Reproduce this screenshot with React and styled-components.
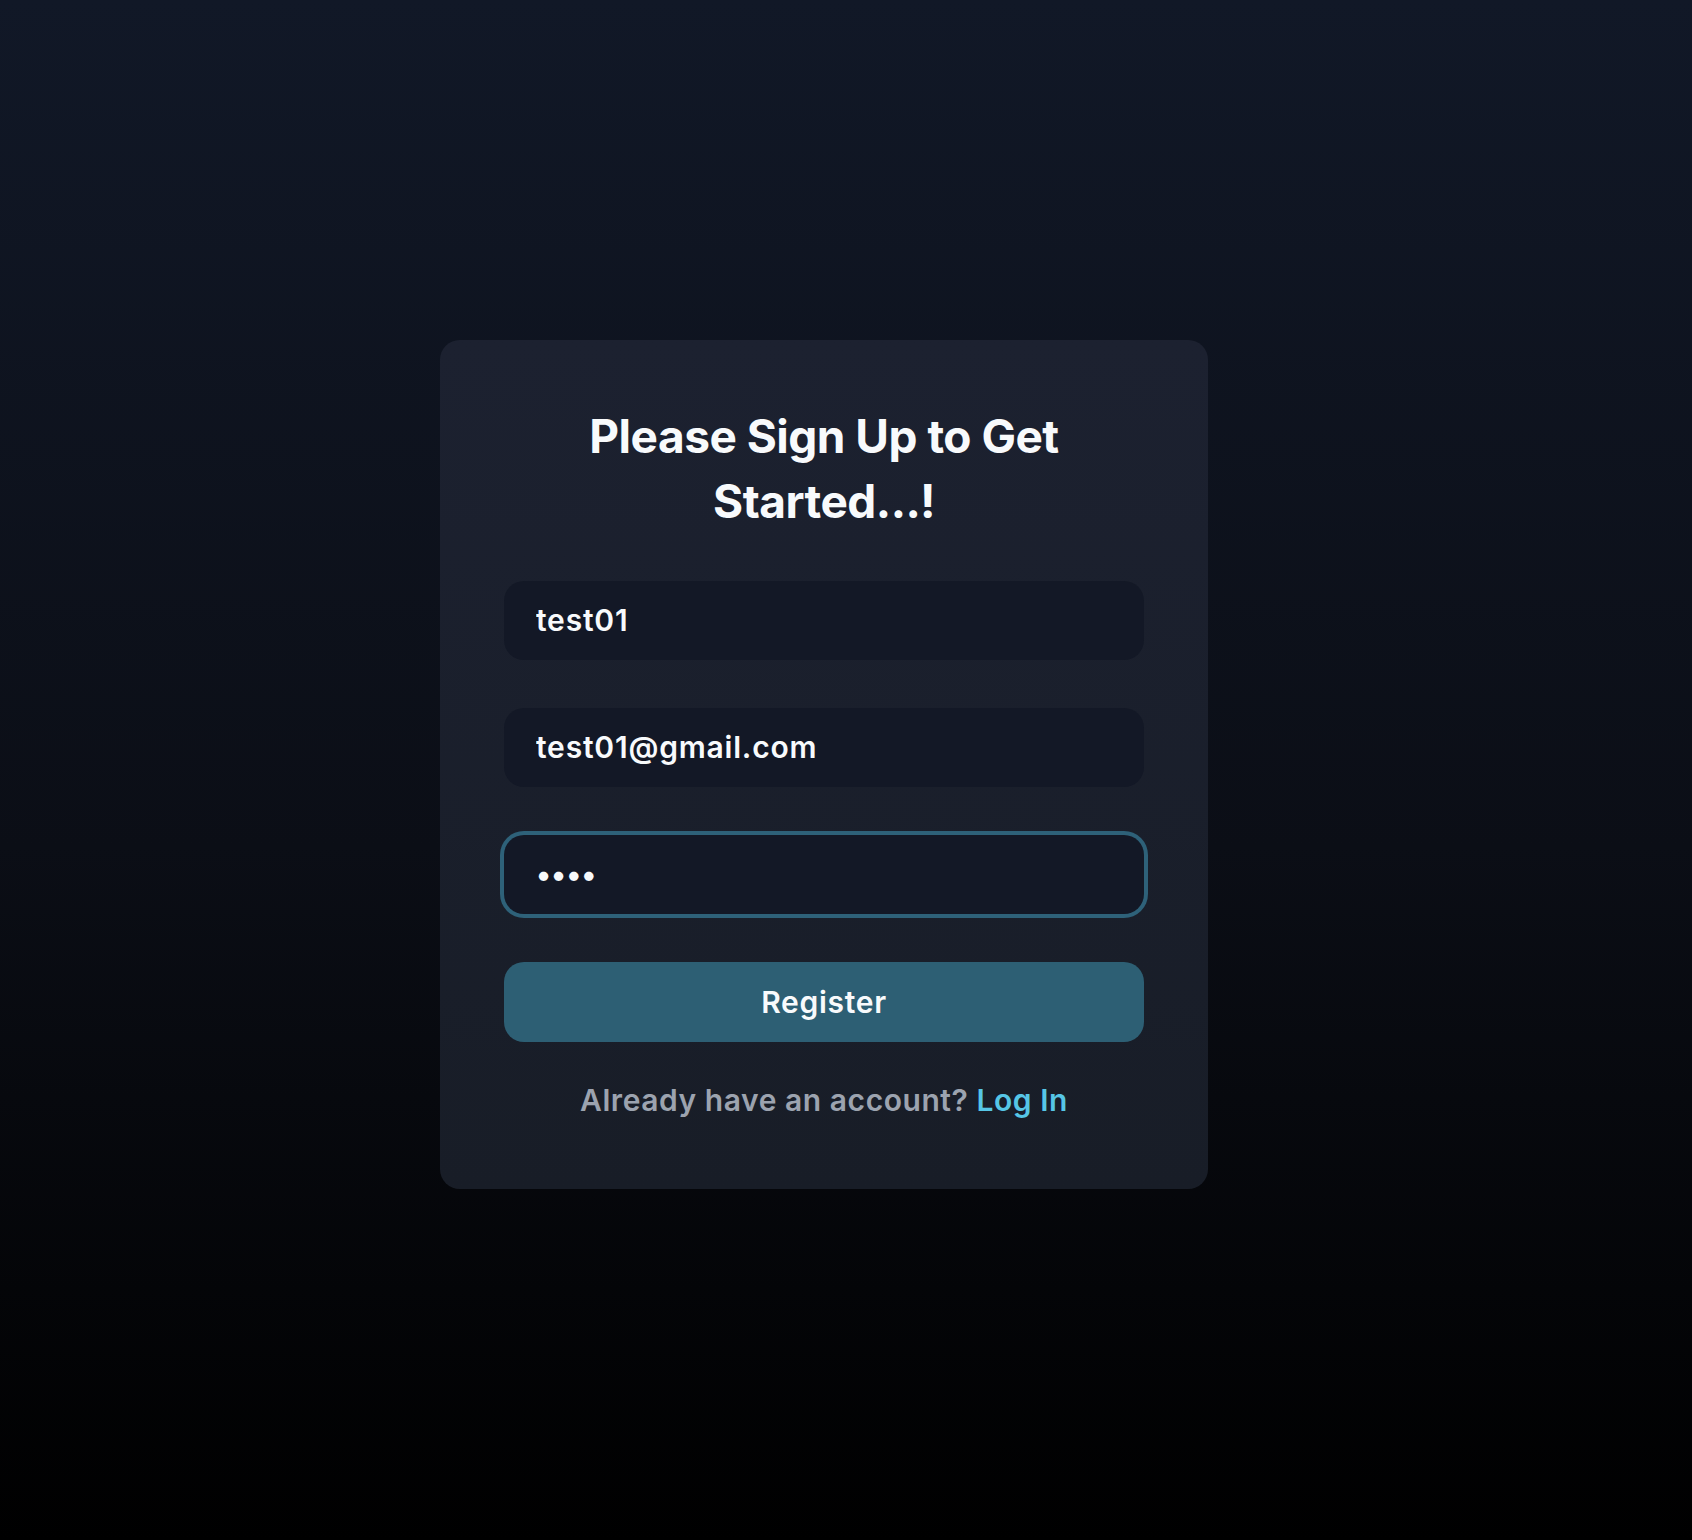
import React from 'react';
import styled, { createGlobalStyle } from 'styled-components';

const GlobalStyle = createGlobalStyle`
  html, body {
    margin: 0;
    padding: 0;
  }
  body {
    font-family: Inter, "Noto Sans", "Liberation Sans", sans-serif;
    background: #000;
  }
  * {
    box-sizing: border-box;
  }
`;

const Page = styled.div`
  min-height: 1540px;
  display: flex;
  align-items: center;
  justify-content: center;
  padding: 0 44px 12px 0;
  background: linear-gradient(to bottom, #111827 0%, #0b0e16 55%, #000000 100%);
`;

const Card = styled.div`
  width: 768px;
  padding: 64px 64px 66px;
  border-radius: 20px;
  background: linear-gradient(to bottom, #1c2130, #181d27);
  display: flex;
  flex-direction: column;
`;

const Title = styled.h1`
  margin: 0 0 47px;
  text-align: center;
  color: #f8fafc;
  font-size: 46px;
  line-height: 65px;
  font-weight: 700;
  letter-spacing: -0.5px;
`;

const Form = styled.form`
  display: flex;
  flex-direction: column;
  gap: 48px;
`;

const Input = styled.input`
  width: 100%;
  height: 79px;
  padding: 0 32px;
  border: none;
  border-radius: 20px;
  background: #131826;
  color: #f8fafc;
  font-family: inherit;
  font-size: 30px;
  font-weight: 600;
  letter-spacing: ${props => (props.type === 'password' ? '0' : '0.8px')};
  outline: none;
  box-shadow: ${props => (props.$active ? '0 0 0 4px #2e6179' : 'none')};
`;

const Button = styled.button`
  width: 100%;
  height: 80px;
  border: none;
  border-radius: 20px;
  background: #2d5f74;
  color: #f8fafc;
  font-family: inherit;
  font-size: 30px;
  font-weight: 600;
  letter-spacing: 0.7px;
  cursor: pointer;
`;

const Footer = styled.p`
  margin: 36px 0 0;
  text-align: center;
  color: #9ca3af;
  font-size: 30px;
  line-height: 45px;
  font-weight: 600;
  letter-spacing: 0.55px;
`;

const LoginLink = styled.a`
  color: #56c6e6;
  text-decoration: none;
`;

const App = () => {
  return (
    <>
      <GlobalStyle />
      <Page>
        <Card>
          <Title>
            Please Sign Up to Get
            <br />
            Started...!
          </Title>
          <Form onSubmit={e => e.preventDefault()}>
            <Input type="text" defaultValue="test01" />
            <Input type="email" defaultValue="test01@gmail.com" />
            <Input type="password" defaultValue="abcd" $active />
            <Button type="submit">Register</Button>
          </Form>
          <Footer>
            Already have an account? <LoginLink href="#">Log In</LoginLink>
          </Footer>
        </Card>
      </Page>
    </>
  );
};

export default App;
